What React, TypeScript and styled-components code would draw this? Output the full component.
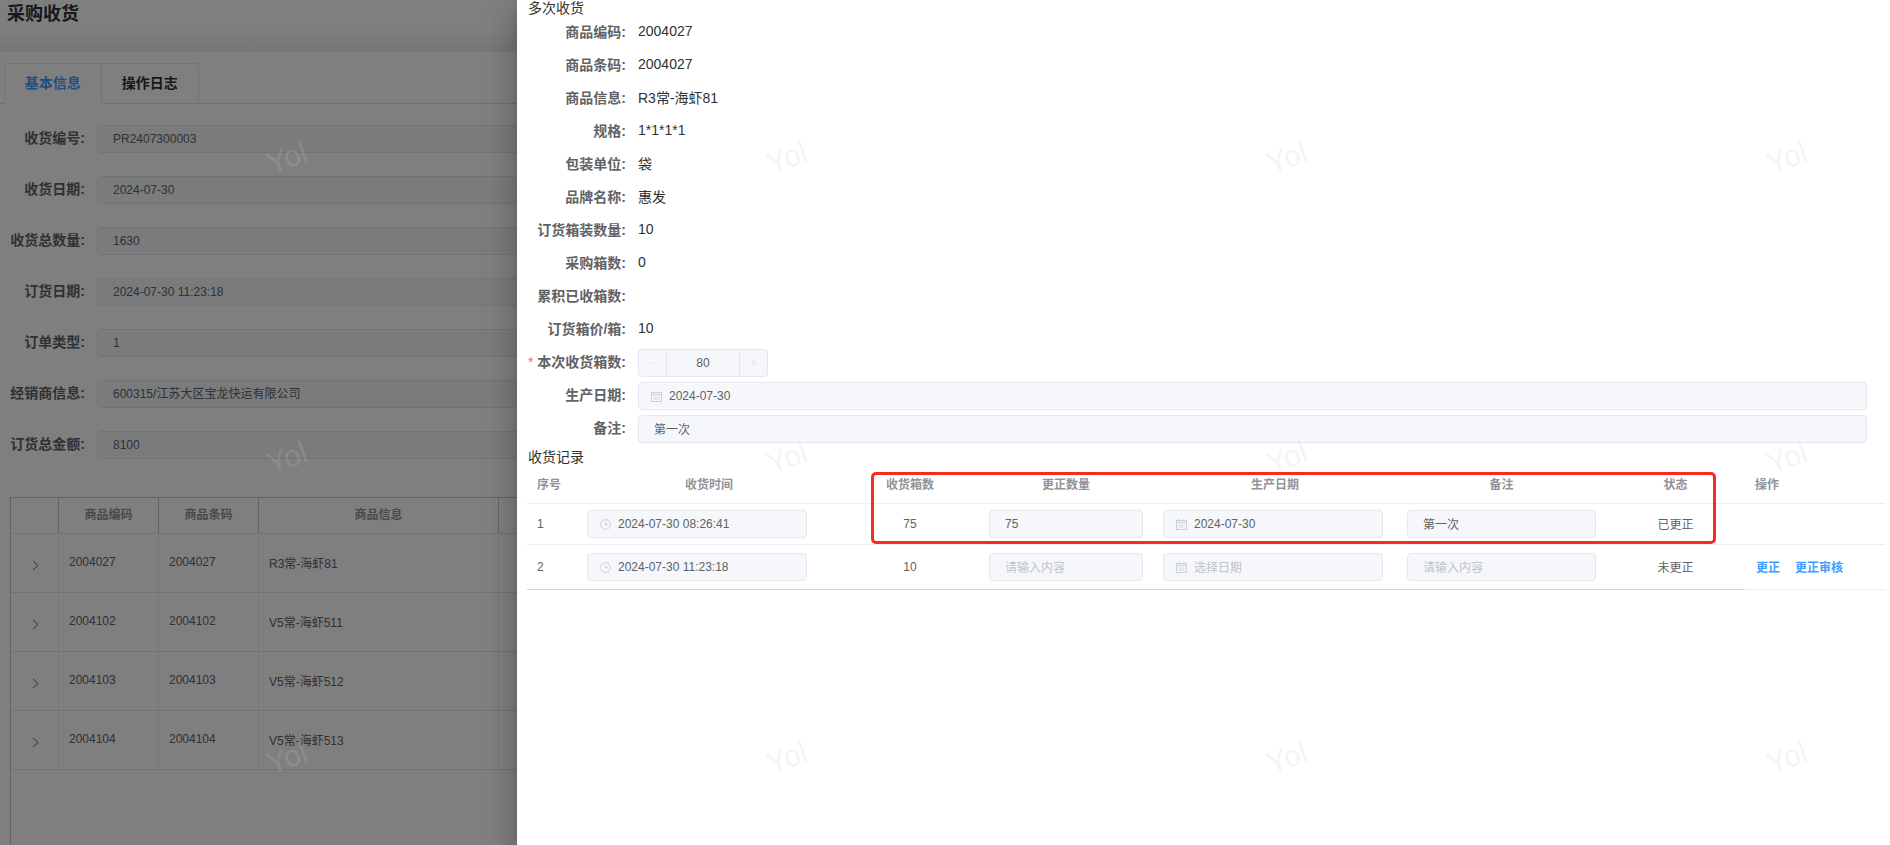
import React from "react";
import styled, { createGlobalStyle } from "styled-components";

const GlobalStyle = createGlobalStyle`
  html, body {
    margin: 0;
    padding: 0;
    height: 100%;
    overflow: hidden;
    background: #fff;
    font-family: "Liberation Sans", "Noto Sans CJK SC", sans-serif;
    color: #606266;
  }
  * {
    box-sizing: border-box;
  }
`;

const Screen = styled.div`
  position: relative;
  width: 1890px;
  height: 845px;
  overflow: hidden;
  background: #fff;
`;

const PageHeader = styled.header`
  height: 52px;
  padding: 4px 7px 0;
  background: linear-gradient(#fff 55%, #ececec);
`;

const PageTitle = styled.h1`
  margin: 0;
  font-size: 18px;
  line-height: 21px;
  font-weight: 700;
  color: #303133;
`;

const TabBar = styled.div`
  display: flex;
  height: 52px;
  padding: 11px 0 0 4px;
  border-bottom: 1px solid #dcdfe6;
`;

const Tab = styled.div<{ $active?: boolean }>`
  width: 97.5px;
  height: 41px;
  border: 1px solid #e4e7ed;
  border-left-width: ${(p) => (p.$active ? 1 : 0)}px;
  border-bottom-color: ${(p) => (p.$active ? "#fff" : "#dcdfe6")};
  border-radius: ${(p) => (p.$active ? "4px 0 0 0" : "0 4px 0 0")};
  text-align: center;
  font-size: 14px;
  line-height: 39px;
  font-weight: 700;
  color: ${(p) => (p.$active ? "#409eff" : "#303133")};
`;

const BaseForm = styled.div`
  display: flex;
  flex-direction: column;
  gap: 23px;
  padding: 21px 0 0 10px;
`;

const BaseRow = styled.div`
  display: flex;
  align-items: center;
  height: 28px;
`;

const BaseLabel = styled.label`
  width: 75px;
  margin-right: 12px;
  padding-bottom: 4px;
  text-align: right;
  white-space: nowrap;
  font-size: 14px;
  font-weight: 700;
  color: #606266;
`;

const BaseValue = styled.div`
  flex: 1;
  height: 28px;
  padding: 0 15px;
  background: #f5f7fa;
  border: 1px solid #e4e7ed;
  border-radius: 4px;
  font-size: 12px;
  line-height: 26px;
  color: #606266;
`;

const GoodsTable = styled.div`
  margin: 38px 0 0 10px;
  height: 348px;
  border-left: 1px solid #c4c6ca;
`;

const GoodsHeadRow = styled.div`
  display: grid;
  grid-template-columns: 48px 100px 100px 240px 1fr;
  height: 37px;
  border-top: 1px solid #c4c6ca;
  border-bottom: 1px solid #e4e7ed;
`;

const GoodsRow = styled.div`
  display: grid;
  grid-template-columns: 48px 100px 100px 240px 1fr;
  height: 59px;
  border-bottom: 1px solid #e4e7ed;
`;

const GoodsHead = styled.div`
  border-right: 1px solid #c4c6ca;
  text-align: center;
  font-size: 12px;
  line-height: 34px;
  font-weight: 700;
  color: #909399;
`;

const GoodsCell = styled.div`
  display: flex;
  align-items: center;
  padding: 0 0 2px 10px;
  border-right: 1px solid #ebeef5;
  font-size: 12px;
  color: #606266;
`;

const ExpandCell = styled(GoodsCell)`
  justify-content: center;
  padding: 4px 0 0 2px;
  color: #666;
`;

const Mask = styled.div`
  position: absolute;
  inset: 0;
  background: rgba(0, 0, 0, 0.5);
`;

const Drawer = styled.aside`
  position: absolute;
  top: 0;
  right: 0;
  bottom: 0;
  width: 1373px;
  padding: 0 5px 0 10px;
  background: #fff;
  box-shadow: 0 8px 10px -5px rgba(0, 0, 0, 0.2), 0 16px 24px 2px rgba(0, 0, 0, 0.14),
    0 6px 30px 5px rgba(0, 0, 0, 0.12);
`;

const SectionTitle = styled.div`
  padding-left: 1px;
  font-size: 14px;
  line-height: 16px;
  color: #303133;
`;

const DetailList = styled.div`
  display: flex;
  flex-direction: column;
  gap: 5px;
  padding: 0 18px 0 0;
  margin-top: 3px;
`;

const DetailRow = styled.div`
  display: flex;
  align-items: center;
  height: 28px;
`;

const DetailLabel = styled.label`
  flex: none;
  width: 99px;
  margin-right: 12px;
  padding-bottom: 5px;
  text-align: right;
  white-space: nowrap;
  font-size: 14px;
  font-weight: 700;
  color: #606266;
`;

const RequiredMark = styled.span`
  margin-right: 4px;
  color: #f56c6c;
  font-weight: 400;
`;

const DetailValue = styled.div`
  padding-bottom: 4px;
  font-size: 14px;
  color: #303133;
`;

const Field = styled.div<{ $placeholder?: boolean; $width?: string }>`
  display: flex;
  align-items: center;
  width: ${(p) => p.$width || "100%"};
  height: 28px;
  padding: 0 15px;
  background: #f5f7fa;
  border: 1px solid #e4e7ed;
  border-radius: 4px;
  font-size: 12px;
  white-space: nowrap;
  color: ${(p) => (p.$placeholder ? "#c0c4cc" : "#606266")};
`;

const IconField = styled(Field)`
  padding: 0 0 0 12px;
  gap: 7px;
`;

// CJK glyphs sit a little low in Noto next to the latin digits
const CjkText = styled.span`
  padding-bottom: 2px;
`;

const Stepper = styled.div`
  display: grid;
  grid-template-columns: 28px 1fr 28px;
  width: 130px;
  height: 28px;
  background: #f5f7fa;
  border: 1px solid #e4e7ed;
  border-radius: 4px;
  font-size: 12px;
  line-height: 26px;
  text-align: center;
  color: #606266;
`;

const StepButton = styled.div<{ $side: "left" | "right" }>`
  display: flex;
  align-items: center;
  justify-content: center;
  color: #e4e7ed;
  border-${(p) => (p.$side === "left" ? "right" : "left")}: 1px solid #e4e7ed;
`;

const RecordTitle = styled(SectionTitle)`
  margin: 6px 0 0;
`;

const RecordTable = styled.div`
  position: relative;
  margin-top: 1px;
`;

const RecordRowWrap = styled.div<{ $height: number; $lineColor?: string }>`
  display: grid;
  grid-template-columns: 50px 264px 138px 174px 244px 209px 139px 140px;
  height: ${(p) => p.$height}px;
  border-bottom: 1px solid ${(p) => p.$lineColor || "#ebeef5"};
`;

const HeadCell = styled.div<{ $left?: boolean }>`
  display: flex;
  align-items: center;
  justify-content: ${(p) => (p.$left ? "flex-start" : "center")};
  padding: ${(p) => (p.$left ? "0 10px 3px" : "0 0 3px")};
  font-size: 12px;
  font-weight: 700;
  color: #909399;
`;

const BodyCell = styled.div<{ $center?: boolean }>`
  display: flex;
  align-items: center;
  justify-content: ${(p) => (p.$center ? "center" : "flex-start")};
  padding: 0 10px;
  font-size: 12px;
  color: #606266;
`;

const DarkLine = styled.div`
  position: absolute;
  left: 0;
  bottom: 0;
  width: 1218px;
  height: 1px;
  background: #d4d4d4;
`;

const ActionLink = styled.a`
  margin: 0 14px 2px 1px;
  font-size: 12px;
  font-weight: 700;
  color: #409eff;
  white-space: nowrap;
`;

const Highlight = styled.div`
  position: absolute;
  left: 871px;
  top: 472px;
  width: 845px;
  height: 72px;
  border: 3px solid #fb2a20;
  border-radius: 5px;
  pointer-events: none;
`;

const WatermarkLayer = styled.div`
  position: absolute;
  inset: 0;
  display: grid;
  grid-template-columns: repeat(4, 500px);
  grid-template-rows: repeat(3, 300px);
  margin: 8px 0 0 37px;
  pointer-events: none;
`;

const Watermark = styled.span`
  display: flex;
  align-items: center;
  justify-content: center;
  font-size: 30px;
  color: rgba(200, 200, 200, 0.2);
  transform: rotate(-20deg);
`;

const CalendarIcon = () => (
  <svg width="11" height="11" viewBox="0 0 11 11" fill="none" stroke="#c8ccd3" strokeWidth="0.9">
    <rect x="0.5" y="1.5" width="10" height="9" />
    <path d="M0.5 3.7H10.5M3 0V2.4M8 0V2.4" />
    <path d="M2.5 6H8.5M2.5 8H8.5" strokeWidth="0.7" />
  </svg>
);

const ClockIcon = () => (
  <svg width="11" height="11" viewBox="0 0 11 11" fill="none" stroke="#c8ccd3" strokeWidth="0.9">
    <circle cx="5.5" cy="5.5" r="4.9" />
    <path d="M5.5 2.8V5.7H8" />
  </svg>
);

const ChevronIcon = () => (
  <svg width="7" height="11" viewBox="0 0 7 11" fill="none" stroke="currentColor" strokeWidth="1">
    <path d="M1 1L6 5.5L1 10" />
  </svg>
);

const baseFields = [
  ["收货编号", "PR2407300003"],
  ["收货日期", "2024-07-30"],
  ["收货总数量", "1630"],
  ["订货日期", "2024-07-30 11:23:18"],
  ["订单类型", "1"],
  ["经销商信息", "600315/江苏大区宝龙快运有限公司"],
  ["订货总金额", "8100"],
];

const goods = [
  ["2004027", "2004027", "R3常-海虾81"],
  ["2004102", "2004102", "V5常-海虾511"],
  ["2004103", "2004103", "V5常-海虾512"],
  ["2004104", "2004104", "V5常-海虾513"],
];

const details = [
  ["商品编码", "2004027"],
  ["商品条码", "2004027"],
  ["商品信息", "R3常-海虾81"],
  ["规格", "1*1*1*1"],
  ["包装单位", "袋"],
  ["品牌名称", "惠发"],
  ["订货箱装数量", "10"],
  ["采购箱数", "0"],
  ["累积已收箱数", ""],
  ["订货箱价/箱", "10"],
];

export default function App() {
  return (
    <Screen>
      <GlobalStyle />
      <PageHeader>
        <PageTitle>采购收货</PageTitle>
      </PageHeader>
      <TabBar>
        <Tab $active>基本信息</Tab>
        <Tab>操作日志</Tab>
      </TabBar>
      <BaseForm>
        {baseFields.map(([label, value]) => (
          <BaseRow key={label}>
            <BaseLabel>{label}:</BaseLabel>
            <BaseValue>{value}</BaseValue>
          </BaseRow>
        ))}
      </BaseForm>
      <GoodsTable>
        <GoodsHeadRow>
          <GoodsHead />
          <GoodsHead>商品编码</GoodsHead>
          <GoodsHead>商品条码</GoodsHead>
          <GoodsHead>商品信息</GoodsHead>
          <GoodsHead />
        </GoodsHeadRow>
        {goods.map((row) => (
          <GoodsRow key={row[0]}>
            <ExpandCell>
              <ChevronIcon />
            </ExpandCell>
            {row.map((text, i) => (
              <GoodsCell key={i}>{text}</GoodsCell>
            ))}
            <GoodsCell />
          </GoodsRow>
        ))}
      </GoodsTable>

      <Mask />

      <Drawer>
        <SectionTitle>多次收货</SectionTitle>
        <DetailList>
          {details.map(([label, value]) => (
            <DetailRow key={label}>
              <DetailLabel>{label}:</DetailLabel>
              <DetailValue>{value}</DetailValue>
            </DetailRow>
          ))}
          <DetailRow>
            <DetailLabel>
              <RequiredMark>*</RequiredMark>本次收货箱数:
            </DetailLabel>
            <Stepper>
              <StepButton $side="left">−</StepButton>
              <span>80</span>
              <StepButton $side="right">+</StepButton>
            </Stepper>
          </DetailRow>
          <DetailRow>
            <DetailLabel>生产日期:</DetailLabel>
            <IconField>
              <CalendarIcon />
              2024-07-30
            </IconField>
          </DetailRow>
          <DetailRow>
            <DetailLabel>备注:</DetailLabel>
            <Field>
              <CjkText>第一次</CjkText>
            </Field>
          </DetailRow>
        </DetailList>
        <RecordTitle>收货记录</RecordTitle>
        <RecordTable>
          <RecordRowWrap $height={38}>
            <HeadCell $left>序号</HeadCell>
            <HeadCell>收货时间</HeadCell>
            <HeadCell>收货箱数</HeadCell>
            <HeadCell>更正数量</HeadCell>
            <HeadCell>生产日期</HeadCell>
            <HeadCell>备注</HeadCell>
            <HeadCell>状态</HeadCell>
            <HeadCell $left>操作</HeadCell>
          </RecordRowWrap>
          <RecordRowWrap $height={41}>
            <BodyCell>1</BodyCell>
            <BodyCell>
              <IconField $width="220px">
                <ClockIcon />
                2024-07-30 08:26:41
              </IconField>
            </BodyCell>
            <BodyCell $center>75</BodyCell>
            <BodyCell>
              <Field>75</Field>
            </BodyCell>
            <BodyCell>
              <IconField $width="220px">
                <CalendarIcon />
                2024-07-30
              </IconField>
            </BodyCell>
            <BodyCell>
              <Field>
                <CjkText>第一次</CjkText>
              </Field>
            </BodyCell>
            <BodyCell $center>
              <CjkText>已更正</CjkText>
            </BodyCell>
            <BodyCell />
          </RecordRowWrap>
          <RecordRowWrap $height={45}>
            <BodyCell>2</BodyCell>
            <BodyCell>
              <IconField $width="220px">
                <ClockIcon />
                2024-07-30 11:23:18
              </IconField>
            </BodyCell>
            <BodyCell $center>10</BodyCell>
            <BodyCell>
              <Field $placeholder>
                <CjkText>请输入内容</CjkText>
              </Field>
            </BodyCell>
            <BodyCell>
              <IconField $width="220px" $placeholder>
                <CalendarIcon />
                <CjkText>选择日期</CjkText>
              </IconField>
            </BodyCell>
            <BodyCell>
              <Field $placeholder>
                <CjkText>请输入内容</CjkText>
              </Field>
            </BodyCell>
            <BodyCell $center>
              <CjkText>未更正</CjkText>
            </BodyCell>
            <BodyCell>
              <ActionLink>更正</ActionLink>
              <ActionLink>更正审核</ActionLink>
            </BodyCell>
          </RecordRowWrap>
          <DarkLine />
        </RecordTable>
      </Drawer>

      <Highlight />

      <WatermarkLayer>
        {Array.from({ length: 12 }, (_, i) => (
          <Watermark key={i}>Yol</Watermark>
        ))}
      </WatermarkLayer>
    </Screen>
  );
}
